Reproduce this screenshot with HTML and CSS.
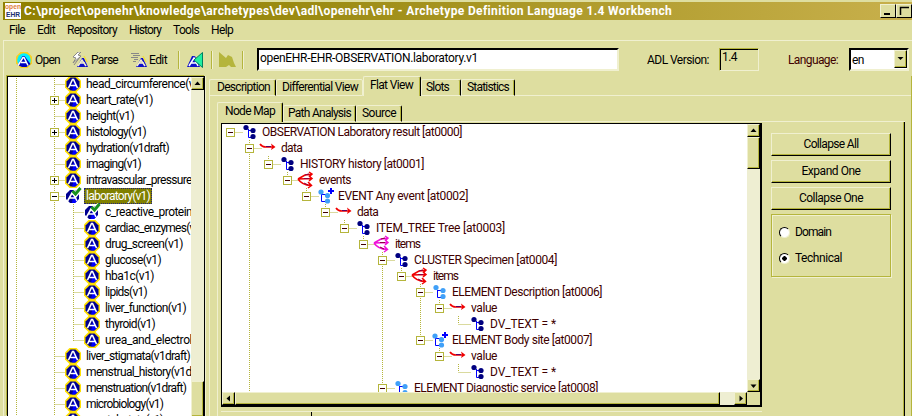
FILE: index.html
```html
<!DOCTYPE html>
<html lang="en">
<head>
<meta charset="utf-8">
<title>Archetype Definition Language 1.4 Workbench</title>
<link rel="stylesheet" href="styles.css">
</head>
<body>
<svg class="defs" width="0" height="0">
  <defs>
    <g id="arche">
      <path d="M4.500 0h7L16 4.500v7L11.500 16h-7L0 11.500v-7z" fill="#ffe000"/>
      <path d="M5.500 1.500h5l4 4v5l-4 4h-5l-4-4v-5z" fill="#000090"/>
      <path d="M8.500 6l5 5-3.500 3.500H7L8 11z" fill="#0000ff"/>
      <path d="M3.500 12L7.500 3.500h1l4 8.500M5.500 9.500h5.500" fill="none" stroke="#fff" stroke-width="1.600"/>
    </g>
    <g id="checked">
      <path d="M5 2h5l4 4v5l-4 4H5l-4-4V6z" fill="#000090"/>
      <path d="M8 8l5 4-3 3H7z" fill="#0000ff"/>
      <path d="M-1 13h3M2.500 13L7 5h1l4 8M4.500 10h6" fill="none" stroke="#fff" stroke-width="1.600"/>
      <path d="M7.500 3.500l3 3 5-6" fill="none" stroke="#fff" stroke-width="5"/>
      <path d="M7.500 3l3 3 5-6" fill="none" stroke="#189020" stroke-width="3"/>
    </g>
    <g id="node">
      <path d="M5.500 5v8.500H10M5.500 6.500H10" fill="none" stroke="#0000ff"/>
      <g fill="#000080"><circle cx="3" cy="3.500" r="2.600"/><circle cx="10" cy="6.500" r="2.600"/><circle cx="10" cy="12.500" r="2.600"/></g>
    </g>
    <g id="element">
      <path d="M4.500 6v7.500H10M4.500 6.500H10" fill="none" stroke="#0000ff"/>
      <g fill="#40a0f8"><circle cx="3" cy="3.500" r="2.600"/><circle cx="10" cy="6.500" r="2.600"/><circle cx="10" cy="12.500" r="2.600"/></g>
    </g>
    <g id="elementplus">
      <path d="M2.500 6v7.500H8M2.500 6.500H8" fill="none" stroke="#0000ff"/>
      <g fill="#40a0f8"><circle cx="2" cy="4" r="2.600"/><circle cx="8.500" cy="7.500" r="2.600"/><circle cx="8.500" cy="13" r="2.600"/></g>
      <path d="M12 0v6M9 3h6" stroke="#0000ff" stroke-width="2"/>
    </g>
    <g id="one">
      <path d="M-2 4Q0 7 4 7H12" fill="none" stroke="#f00000" stroke-width="1.600"/>
      <path d="M4 6.500h5" stroke="#600060"/><path d="M9 3.500l4.500 3.500L9 10l1-3z" fill="#f00000"/>
    </g>
    <g id="fan">
      <path d="M-2 7L5 3L12 2M-2 7L12 6.500M-2 7Q2 13 11 13.500M9 0l3 2-3 3M9 4l3 2.500L9 9M8 10l3.500 3.500L8 16" fill="none" stroke="currentColor" stroke-width="1.500"/>
      <path d="M4 6.500h5M5 3l4-1M4 11l4 2" stroke="#900040"/>
    </g>
  </defs>
</svg>
<header class="title">
  <svg class="logo" width="16" height="16"><path d="M0 0h16v16H0z" fill="#fff"/><text x="0" y="5.500" textLength="16" lengthAdjust="spacingAndGlyphs" fill="#e08040">open</text><text x="1" y="14" textLength="14" lengthAdjust="spacingAndGlyphs" fill="#203070">EHR</text></svg>
  <span class="caption" data-w="648">C:\project\openehr\knowledge\archetypes\dev\adl\openehr\ehr - Archetype Definition Language 1.4 Workbench</span>
  <span class="winbtn"><svg width="15" height="13"><path d="M3 9h6" stroke="#000" stroke-width="2"/></svg></span>
  <span class="winbtn"><svg width="15" height="13"><path d="M3.500 10V2.500H12" fill="none" stroke="#000" stroke-width="1.500"/></svg></span>
</header>
<nav class="menu">
  <span data-w="16">File</span><span data-w="18">Edit</span><span data-w="50">Repository</span><span data-w="32">History</span><span data-w="26">Tools</span><span data-w="22">Help</span>
</nav>
<div class="toolbar">
  <svg class="tool" width="16" height="16"><path d="M4.500 0h7L16 4.500v7L11.500 16h-7L0 11.500v-7z" fill="#f8d020"/><circle cx="8" cy="8" r="6.800" fill="#00f0ff"/><path d="M1.500 13l5-9h2l6 8-4 3H6z" fill="#0000c0"/><path d="M2 13.500l5-8h1l4 8M5 10.500h5" fill="none" stroke="#fff" stroke-width="1.500"/></svg>
  <span class="open" data-w="25">Open</span>
  <svg class="tool" width="16" height="16"><path d="M6 0L1 5l3 1-3 5 8-7-3-1 3-3zM8 5l-6 8" fill="#fff" stroke="#888"/><path d="M5 15l5-9h2l4 9z" fill="#1010c8"/><path d="M6 14l4-6 4 6M8 11h5" fill="none" stroke="#f4f0d0" stroke-width="1.500"/><path d="M12 4l3 6" stroke="#f0e040" stroke-width="1.500"/></svg>
  <span class="parse" data-w="27">Parse</span>
  <svg class="tool" width="16" height="16"><path d="M0 1.500h8M2 3.500h7M0 5.500h7M3 7.500h4M2 9.500h3" stroke="#888"/><path d="M5 15l5-9h2l4 9z" fill="#1010c8"/><path d="M6 14l4-6 4 6M8 11h5" fill="none" stroke="#f4f0d0" stroke-width="1.500"/><path d="M12 4l3 6" stroke="#f0e040" stroke-width="1.500"/></svg>
  <span class="edit" data-w="18">Edit</span>
  <i class="sep"></i>
  <svg class="back" width="17" height="16"><path d="M0 15L5 4h3l5 11z" fill="#1010c8"/><path d="M2 14l5-8 4 8M4 11h6" fill="none" stroke="#fff" stroke-width="1.500"/><path d="M15.500.5v15L7 8z" fill="#20f0a0" stroke="#008060"/></svg>
  <i class="sep"></i>
  <svg class="fwd" width="18" height="16"><path d="M1 0l7 6 2-3 4 2 2 6 2 4h-5l-2-2-3 2H1z" fill="#b5b53c"/></svg>
  <i class="sep"></i>
  <div class="field path"><span data-w="218">openEHR-EHR-OBSERVATION.laboratory.v1</span></div>
  <span class="adl" data-w="62">ADL Version:</span>
  <div class="field version"><span data-w="15">1.4</span></div>
  <span class="lang" data-w="50">Language:</span>
  <div class="field select"><span data-w="12">en</span><i class="btn"><svg width="12" height="14"><path d="M2.500 6h6L5.500 9z"/></svg></i></div>
</div>
<main>
  <section class="side">
    <div class="rows" id="archetypes"></div>
    <div class="vbar"><i class="btn"><svg width="11" height="11"><path d="M2.500 7h6L5.500 3.500z"/></svg></i><i class="space"></i><i class="thumb"></i></div>
  </section>
  <section class="work">
    <div class="tabs outer">
      <span class="tab"><b data-w="53">Description</b></span><span class="tab"><b data-w="76">Differential View</b></span><span class="tab on"><b data-w="43">Flat View</b></span><span class="tab"><b data-w="23">Slots</b></span><span class="tab"><b data-w="42">Statistics</b></span><i class="rest"></i>
    </div>
    <div class="page">
      <div class="tabs inner">
        <span class="tab on"><b data-w="50">Node Map</b></span><span class="tab"><b data-w="63">Path Analysis</b></span><span class="tab"><b data-w="34">Source</b></span><i class="rest"></i>
      </div>
      <div class="content">
        <div class="left">
          <div class="map">
            <div class="rows" id="nodes"></div>
            <div class="vbar"><i class="btn"><svg width="11" height="11"><path d="M2.500 7h6L5.500 3.500z"/></svg></i><i class="thumb"></i><i class="space"></i><i class="btn"><svg width="11" height="11"><path d="M2.500 4.500h6L5.500 8z"/></svg></i></div>
            <div class="hbar"><i class="btn"><svg width="11" height="11"><path d="M7 2.500v6L3.500 5.500z"/></svg></i><i class="thumb"></i><i class="space"></i><i class="btn"><svg width="11" height="11"><path d="M4.500 2.500v6L8 5.500z"/></svg></i></div>
          </div>
          <div class="lower"><i></i></div>
        </div>
        <aside>
          <button><span data-w="55">Collapse All</span></button>
          <button><span data-w="59">Expand One</span></button>
          <button><span data-w="64">Collapse One</span></button>
          <div class="group">
            <label><i class="radio"></i><span data-w="36">Domain</span></label>
            <label><i class="radio picked"></i><span data-w="47">Technical</span></label>
          </div>
        </aside>
      </div>
    </div>
  </section>
</main>
<script src="tree.js"></script>
</body>
</html>
```

FILE: styles.css
```css
* { box-sizing: border-box; }
body { margin: 0; width: 912px; height: 416px; overflow: hidden; background: #dedea0; color: #000; font: 12px/16px Roboto, "Liberation Sans", Arial, sans-serif; display: flex; flex-direction: column; }
.defs { display: block; height: 0; flex: none; }
[data-w] { white-space: pre; flex: none; display: inline-block; }
i { font-style: normal; }
svg { flex: none; display: block; }

.title { flex: none; margin: 2px 0 0 3px; height: 18px; display: flex; align-items: center; background: linear-gradient(90deg, #908000, #9c8c14 35%, #c8b04c); color: #fff; font-weight: bold; }
.logo { margin: 0 3px 0 2px; font: bold 7px "Liberation Sans", sans-serif; }
.caption { margin-right: 208px; line-height: 18px; }
.winbtn { flex: none; width: 16px; height: 14px; background: #dedea0; border: 1px solid #f0f0d0; border-right-color: #000; border-bottom-color: #000; }

.menu { flex: none; height: 21px; margin-left: 3px; padding-left: 6px; display: flex; gap: 12px; line-height: 20px; border-bottom: 1px solid #f0f0d0; }
.toolbar { flex: none; height: 35px; display: flex; align-items: center; margin-left: 3px; padding: 2px 0 0 12px; border-left: 1px solid #f0f0d0; }
.open { margin: 0 12px 0 3px; }
.parse { margin: 0 13px 0 3px; }
.edit { margin: 0 11px 0 2px; }
.sep { width: 2px; height: 18px; background: #b5b53c; border-right: 1px solid #f0f0d0; }
.back { margin: 0 7px; }
.fwd { margin: 0 6px 0 5px; }
.field { flex: none; height: 23px; background: #fff; border: 2px solid #000; border-color: #000 #f0f0d0 #f0f0d0 #000; padding-left: 1px; display: flex; line-height: 17px; }
.path { width: 362px; margin: 0 28px 0 13px; }
.version { width: 40px; background: #dedea0; border-width: 1px; box-shadow: inset 1px 1px #000; border-color: #b5b53c #f0f0d0 #f0f0d0 #b5b53c; padding-left: 2px; margin: 0 29px 0 10px; }
.lang { color: #400000; }
.select { width: 60px; margin-left: 11px; line-height: 20px; justify-content: space-between; }
.select .btn { width: 13px; height: 18px; }

main { flex: 1; min-height: 0; display: flex; margin-left: 3px; border-left: 1px solid #f0f0d0; }
.side { flex: none; width: 198px; margin-left: 3px; border: 1px solid #000; border-bottom: 0; box-shadow: -1px -1px #b5b53c, 1px 0 #f0f0d0; display: flex; background: #fff; }
.side .rows { width: 183px; overflow: hidden; }
.side .row:first-child { margin-top: -1px; }
.row { height: 16px; display: flex; white-space: nowrap; }
.row svg { overflow: visible; }
.row .label { height: 16px; line-height: 16px; }
.side .label { margin-left: 3px; padding-left: 2px; }
.map .label { margin-left: 3px; }
.row .sel { color: #fff; background: #808000; outline: 1px dotted #202080; outline-offset: -1px; padding-right: 2px; }
.vbar { width: 13px; flex: none; background: #eeeed2; display: flex; flex-direction: column; }
.btn, .thumb { display: block; flex: none; background: #dedea0; border: 1px solid #f0f0d0; border-right-color: #000; border-bottom-color: #000; box-shadow: inset -1px -1px #b5b53c; }
.vbar .btn { height: 13px; }
.space { flex: 1; }
.side .thumb { height: 35px; border-bottom: 0; }

.work { flex: 1; margin-left: 4px; display: flex; flex-direction: column; border-right: 1px solid #b5b53c; }
.tabs { flex: none; display: flex; align-items: flex-end; }
.tab { flex: none; height: 17px; border: 1px solid #f0f0d0; border-right: 1px solid #000; box-shadow: inset -1px 0 #b5b53c; border-radius: 2px 2px 0 0; display: flex; line-height: 15px; }
.tab b { font-weight: normal; }
.tab.on { height: 20px; border-bottom: 0; line-height: 17px; }
.rest { flex: 1; height: 1px; background: #f0f0d0; }
.outer { height: 20px; }
.outer .tab:nth-child(1) { width: 67px; padding-left: 7px; }
.outer .tab:nth-child(2) { width: 87px; padding-left: 5px; border-right-color: #f0f0d0; box-shadow: none; }
.outer .tab:nth-child(3) { width: 58px; padding-left: 6px; }
.outer .tab:nth-child(4) { width: 40px; padding-left: 4px; }
.outer .tab:nth-child(5) { width: 54px; padding-left: 5px; }
.page { flex: 1; min-height: 0; border-left: 1px solid #f0f0d0; padding: 6px 6px 0 7px; display: flex; flex-direction: column; }
.inner { height: 20px; }
.inner .tab:nth-child(1) { width: 66px; padding-left: 7px; }
.inner .tab:nth-child(2) { width: 73px; padding-left: 4px; }
.inner .tab:nth-child(3) { width: 46px; padding-left: 5px; }
.content { flex: 1; min-height: 0; border-left: 1px solid #f0f0d0; border-right: 1px solid #000; box-shadow: inset -1px 0 #b5b53c; display: flex; padding: 1px 0 0 3px; }
.left { width: 541px; flex: none; display: flex; flex-direction: column; }
.map { height: 284px; flex: none; border: 1px solid #000; border-right-width: 2px; border-bottom-width: 2px; display: grid; grid-template: 268px 13px / 525px 13px; background: #dedea0; }
.map .rows { background: #fff; overflow: hidden; color: #400000; }
.map .vbar .thumb { height: 32px; }
.hbar { background: #eeeed2; display: flex; }
.hbar .btn { width: 13px; }
.hbar .thumb { width: 485px; }
.lower { flex: 1; margin-top: 4px; border-top: 1px solid #f0f0d0; display: flex; }
.lower i { width: 91px; border-right: 1px solid #000; }
aside { margin: 10px 0 0 9px; width: 120px; display: flex; flex-direction: column; gap: 4px; }
button { height: 23px; padding: 0; font: inherit; color: #000; background: #dedea0; border: 1px solid #f0f0d0; border-right-color: #000; border-bottom-color: #000; box-shadow: inset -1px -1px #b5b53c; line-height: 21px; }
.group { height: 63px; border: 1px solid #b5b53c; box-shadow: 1px 1px #f0f0d0, inset 1px 1px #f0f0d0; padding: 9px 0 0 7px; display: flex; flex-direction: column; gap: 10px; }
label { display: flex; align-items: center; gap: 5px; height: 16px; }
.radio { width: 11px; height: 11px; border: 1px solid #000; border-right-color: #f0f0d0; border-bottom-color: #f0f0d0; border-radius: 50%; background: #fff; }
.picked { background: radial-gradient(circle, #000 2px, #fff 2.5px); }
```

FILE: tree.js
```js
// Row: [level, box, icon, label, label width, guide columns]
const archetypes = [
  [0, '', 'arche', 'head_circumference(v1)', 118],
  [0, '+', 'arche', 'heart_rate(v1)', 67],
  [0, '', 'arche', 'height(v1)', 48],
  [0, '+', 'arche', 'histology(v1)', 60],
  [0, '', 'arche', 'hydration(v1draft)', 83],
  [0, '', 'arche', 'imaging(v1)', 55],
  [0, '+', 'arche', 'intravascular_pressure(v1)', 124],
  [0, '-', 'checked', 'laboratory(v1)', 64],
  [1, '', 'checked', 'c_reactive_protein(v1)', 106],
  [1, '', 'arche', 'cardiac_enzymes(v1)', 99],
  [1, '', 'arche', 'drug_screen(v1)', 78],
  [1, '', 'arche', 'glucose(v1)', 56],
  [1, '', 'arche', 'hba1c(v1)', 49],
  [1, '', 'arche', 'lipids(v1)', 42],
  [1, '', 'arche', 'liver_function(v1)', 81],
  [1, '', 'arche', 'thyroid(v1)', 50],
  [1, 'end', 'arche', 'urea_and_electrolytes(v1)', 127],
  [0, '', 'arche', 'liver_stigmata(v1draft)', 104],
  [0, '', 'arche', 'menstrual_history(v1draft)', 125],
  [0, '', 'arche', 'menstruation(v1draft)', 100],
  [0, '', 'arche', 'microbiology(v1)', 77],
  [0, '', 'arche', 'mental_state(v1)', 77]
];
const nodes = [
  [0, '-', 'node', 'OBSERVATION Laboratory result [at0000]', 200, []],
  [1, '-', 'one', 'data', 21, [1]],
  [2, '-', 'node', 'HISTORY history [at0001]', 124, [1]],
  [3, '-', 'fan', 'events', 32, [1]],
  [4, '-', 'elementplus', 'EVENT Any event [at0002]', 130, [1]],
  [5, '-', 'one', 'data', 21, [1]],
  [6, '-', 'node', 'ITEM_TREE Tree [at0003]', 129, [1]],
  [7, '-', 'fan pink', 'items', 25, [1]],
  [8, '-', 'node', 'CLUSTER Specimen [at0004]', 143, [1, 8]],
  [9, '-', 'fan', 'items', 25, [1, 8]],
  [10, '-', 'element', 'ELEMENT Description [at0006]', 150, [1, 8, 10]],
  [11, '-', 'one', 'value', 26, [1, 8, 10]],
  [12, '', 'node', 'DV_TEXT = *', 66, [1, 8, 10]],
  [10, '-', 'elementplus', 'ELEMENT Body site [at0007]', 140, [1, 8]],
  [11, '-', 'one', 'value', 26, [1, 8]],
  [12, '', 'node', 'DV_TEXT = *', 66, [1, 8]],
  [8, '-', 'element', 'ELEMENT Diagnostic service [at0008]', 184, [1]]
];
const dots = (x1, y1, x2, y2) => `<path d="M${x1} ${y1}L${x2} ${y2}" stroke="#b5b53c" stroke-dasharray="1 1"/>`;

function row(center, width, box, icon, label, w, lines, ink) {
  let g = lines + dots(center, 8.5, width, 8.5);
  if (box === '+' || box === '-') {
    g += `<rect x="${center - 4}" y="4.500" width="8" height="8" fill="#fff" stroke="#b5b53c"/>`;
    g += `<path d="M${center - 2.5} 8.500h5${box === '+' ? `M${center} 6v5` : ''}" stroke="${ink}"/>`;
  }
  const [shape, tint] = icon.split(' ');
  const sel = label === 'laboratory(v1)' ? ' sel' : '';
  return `<div class="row"><svg width="${width}" height="16">${g}</svg>` +
    `<svg width="16" height="16" color="${tint ? '#f010d8' : '#f00000'}"><use href="#${shape}"/></svg>` +
    `<span class="label${sel}"><span data-w="${w}">${label}</span></span></div>`;
}
document.getElementById('archetypes').innerHTML = archetypes.map(([lv, box, icon, label, w]) => {
  let l = dots(8.5, 0, 8.5, 16) + dots(46.5, 0, 46.5, 16);
  if (lv) l += dots(65.5, 0, 65.5, box === 'end' ? 9 : 16);
  return row(46.5 + 19 * lv, 57 + 19 * lv, box, icon, label, w, l, '#000');
}).join('');
document.getElementById('nodes').innerHTML = nodes.map(([lv, box, icon, label, w, cols]) => {
  const c = 8.5 + 19 * lv;
  let l = cols.map(k => dots(8.5 + 19 * k, 0, 8.5 + 19 * k, 16)).join('');
  if (lv) l += dots(c, 0, c, 8);
  return row(c, 21 + 19 * lv, box, icon, label, w, l, '#400000');
}).join('');

document.querySelectorAll('[data-w]').forEach(el => {
  const w = +el.dataset.w;
  el.style.width = 'max-content';
  const extra = w - el.getBoundingClientRect().width;
  el.style.letterSpacing = extra / el.textContent.length + 'px';
  el.style.width = w + 'px';
});
```
